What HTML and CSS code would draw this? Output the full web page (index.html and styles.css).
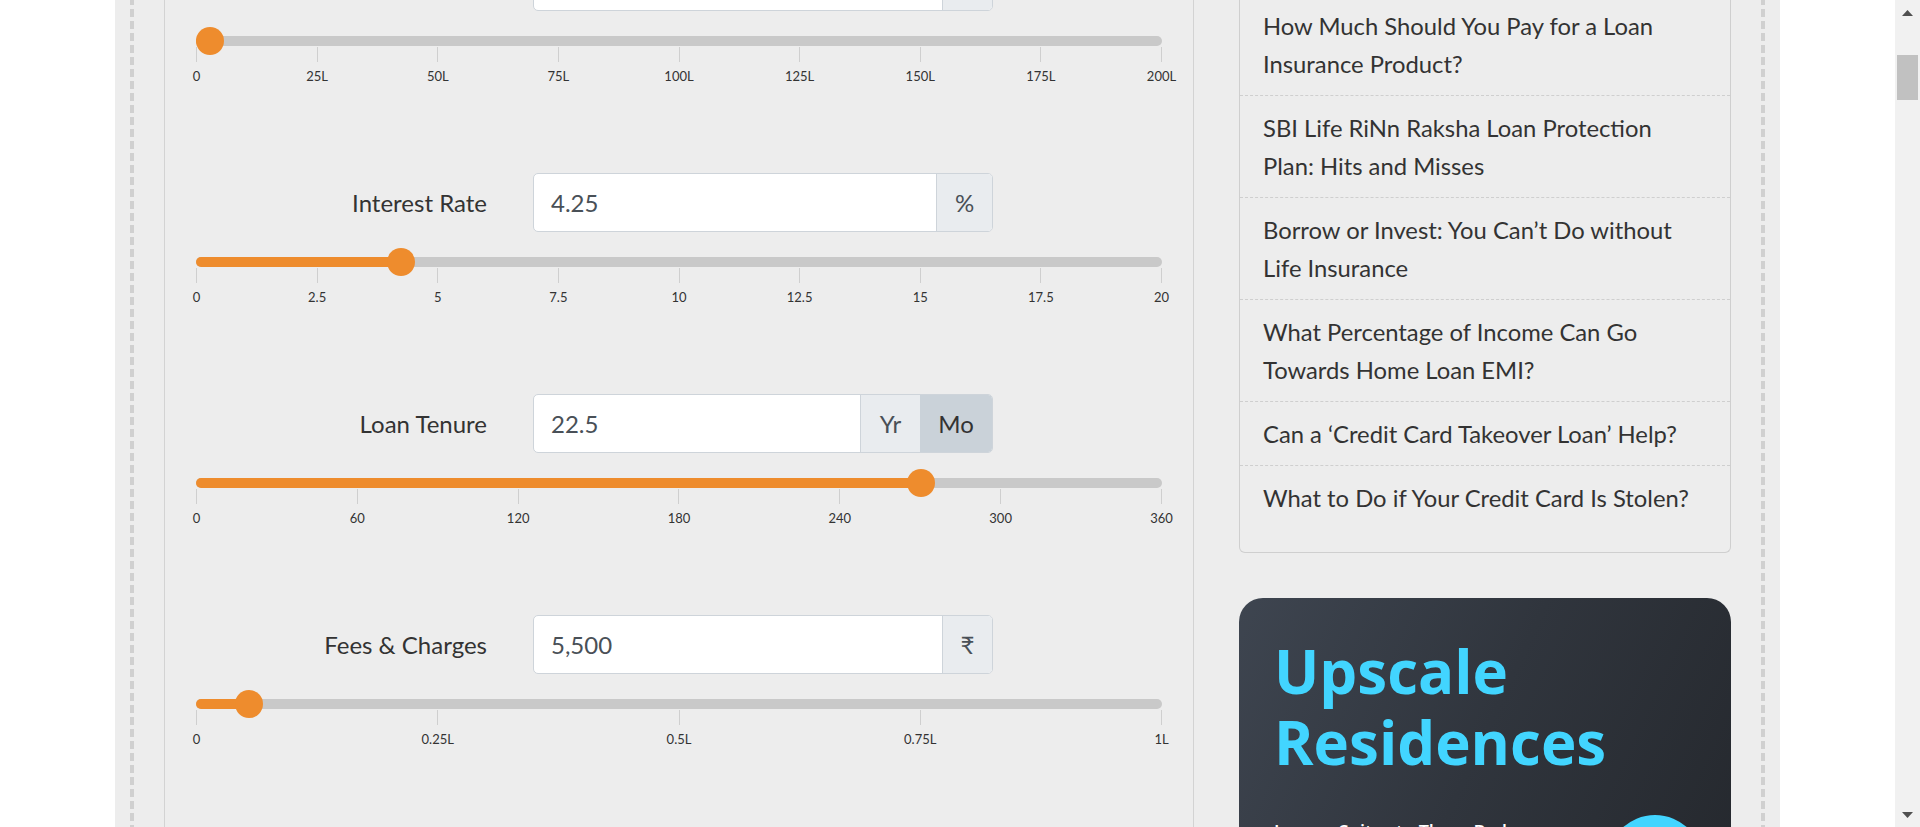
FILE: index.html
```html
<!DOCTYPE html>
<html lang="en">
<head>
<meta charset="utf-8">
<title>EMI Calculator</title>
<link rel="stylesheet" href="styles.css">
</head>
<body>
<div class="viewport">
  <div class="page">
    <div class="frame">
      <div class="inner">
        <main class="calc">
          <section class="field">
            <div class="field-row">
              <div class="field-label">Loan Amount</div>
              <div class="input-group">
                <div class="form-value">3,00,000</div>
                <div class="addon addon-rupee">₹</div>
              </div>
            </div>
            <div class="slider">
              <div class="track"><div class="fill" style="width:1.5%"></div><span class="handle" style="left:1.5%"></span></div>
              <div class="ticks">
                <div class="tick"><span>0</span></div>
                <div class="tick"><span>25L</span></div>
                <div class="tick"><span>50L</span></div>
                <div class="tick"><span>75L</span></div>
                <div class="tick"><span>100L</span></div>
                <div class="tick"><span>125L</span></div>
                <div class="tick"><span>150L</span></div>
                <div class="tick"><span>175L</span></div>
                <div class="tick"><span>200L</span></div>
              </div>
            </div>
          </section>

          <section class="field">
            <div class="field-row">
              <div class="field-label">Interest Rate</div>
              <div class="input-group">
                <div class="form-value">4.25</div>
                <div class="addon addon-pct">%</div>
              </div>
            </div>
            <div class="slider">
              <div class="track"><div class="fill" style="width:21.25%"></div><span class="handle" style="left:21.25%"></span></div>
              <div class="ticks">
                <div class="tick"><span>0</span></div>
                <div class="tick"><span>2.5</span></div>
                <div class="tick"><span>5</span></div>
                <div class="tick"><span>7.5</span></div>
                <div class="tick"><span>10</span></div>
                <div class="tick"><span>12.5</span></div>
                <div class="tick"><span>15</span></div>
                <div class="tick"><span>17.5</span></div>
                <div class="tick"><span>20</span></div>
              </div>
            </div>
          </section>

          <section class="field">
            <div class="field-row">
              <div class="field-label">Loan Tenure</div>
              <div class="input-group">
                <div class="form-value">22.5</div>
                <div class="addon addon-yr">Yr</div>
                <div class="addon addon-mo">Mo</div>
              </div>
            </div>
            <div class="slider">
              <div class="track"><div class="fill" style="width:75%"></div><span class="handle" style="left:75%"></span></div>
              <div class="ticks">
                <div class="tick"><span>0</span></div>
                <div class="tick"><span>60</span></div>
                <div class="tick"><span>120</span></div>
                <div class="tick"><span>180</span></div>
                <div class="tick"><span>240</span></div>
                <div class="tick"><span>300</span></div>
                <div class="tick"><span>360</span></div>
              </div>
            </div>
          </section>

          <section class="field">
            <div class="field-row">
              <div class="field-label">Fees &amp; Charges</div>
              <div class="input-group">
                <div class="form-value">5,500</div>
                <div class="addon addon-rupee">₹</div>
              </div>
            </div>
            <div class="slider">
              <div class="track"><div class="fill" style="width:5.5%"></div><span class="handle" style="left:5.5%"></span></div>
              <div class="ticks">
                <div class="tick"><span>0</span></div>
                <div class="tick"><span>0.25L</span></div>
                <div class="tick"><span>0.5L</span></div>
                <div class="tick"><span>0.75L</span></div>
                <div class="tick"><span>1L</span></div>
              </div>
            </div>
          </section>
        </main>

        <aside class="side">
          <div class="links">
            <ul class="link-list">
              <li>How Much Should You Pay for a Loan Insurance Product?</li>
              <li>SBI Life RiNn Raksha Loan Protection Plan: Hits and Misses</li>
              <li>Borrow or Invest: You Can’t Do without Life Insurance</li>
              <li>What Percentage of Income Can Go Towards Home Loan EMI?</li>
              <li>Can a ‘Credit Card Takeover Loan’ Help?</li>
              <li>What to Do if Your Credit Card Is Stolen?</li>
            </ul>
          </div>

          <div class="promo">
            <h2 class="promo-title">Upscale Residences</h2>
            <div class="promo-row">
              <p class="promo-text">Luxury Suites to Three Bedroom Homes</p>
              <span class="promo-btn"></span>
            </div>
          </div>
        </aside>
      </div>
    </div>
  </div>

  <div class="scrollbar">
    <div class="sb-btn">
      <svg width="11" height="6" viewBox="0 0 11 6"><polygon points="0,6 5.5,0 11,6" fill="#505050"/></svg>
    </div>
    <div class="sb-track"><div class="sb-thumb"></div></div>
    <div class="sb-btn">
      <svg width="11" height="6" viewBox="0 0 11 6"><polygon points="0,0 11,0 5.5,6" fill="#505050"/></svg>
    </div>
  </div>
</div>
</body>
</html>
```

FILE: styles.css
```css
* { box-sizing: border-box; }

html, body {
  margin: 0;
  height: 100%;
  overflow: hidden;
}

body {
  font-family: Lato, "Noto Sans", sans-serif;
  color: #333;
  background: #fff;
}

.viewport {
  display: flex;
  height: 100vh;
}

.page {
  flex: 1;
  min-width: 0;
  display: flex;
  justify-content: center;
}

.frame {
  flex: none;
  width: 1665px;
  height: 100%;
  background: #ededed;
  padding: 0 15px;
}

.inner {
  height: 100%;
  display: flex;
  align-items: flex-start;
  gap: 45px;
  padding: 0 34px;
  background:
    repeating-linear-gradient(to bottom, #d0d0d0 0 8px, transparent 8px 12px) left -3px / 4px 110% no-repeat,
    repeating-linear-gradient(to bottom, #d0d0d0 0 8px, transparent 8px 12px) right -3px / 4px 110% no-repeat;
}

/* calculator card */
.calc {
  flex: none;
  width: 1030px;
  align-self: stretch;
  margin-top: -48px;
  height: calc(100% + 48px);
  border-left: 1px solid #d3d3d3;
  border-right: 1px solid #d3d3d3;
  padding: 0 31px;
}

.field {
  height: 221px;
}

.field-row {
  display: grid;
  grid-template-columns: 291px 460px;
  column-gap: 46px;
  align-items: center;
  height: 59px;
}

.field-label {
  text-align: right;
  font-size: 24px;
  color: #333;
}

.input-group {
  display: flex;
  align-items: center;
  height: 59px;
  border: 1px solid #ced4da;
  border-radius: 5px;
  overflow: hidden;
  background: #fff;
}

.form-value {
  flex: 1;
  padding: 0 17px;
  font-size: 24px;
  line-height: 30px;
  color: #495057;
}

.addon {
  align-self: stretch;
  display: flex;
  align-items: center;
  justify-content: center;
  background: #e9ecef;
  border-left: 1px solid #ced4da;
  font-size: 24px;
  color: #495057;
}

.addon-pct { width: 56px; }
.addon-rupee { width: 50px; }
.addon-yr { width: 60px; }
.addon-mo { width: 72px; background: #cad2d9; color: #333; border-left: none; }

.slider {
  margin-top: 25px;
}

.track {
  position: relative;
  height: 10px;
  border-radius: 5px;
  background: #c9c9c9;
}

.fill {
  height: 100%;
  border-radius: 5px;
  background: #ee8c2d;
}

.handle {
  position: absolute;
  top: 50%;
  width: 28px;
  height: 28px;
  margin-top: -14px;
  border-radius: 50%;
  background: #ee8c2d;
  transform: translateX(-50%);
}

.ticks {
  display: flex;
  justify-content: space-between;
  margin-top: 1px;
}

.tick {
  width: 1px;
  display: flex;
  flex-direction: column;
  align-items: center;
}

.tick::before {
  content: "";
  display: block;
  width: 1px;
  height: 15px;
  background: #cfcfcf;
}

.tick span {
  margin-top: 6px;
  font-size: 13px;
  line-height: 16px;
  white-space: nowrap;
  color: #333;
}

/* sidebar */
.side {
  flex: none;
  width: 492px;
  margin-top: -6px;
}

.links {
  border: 1px solid #cfcfcf;
  border-top: none;
  border-radius: 0 0 6px 6px;
  padding-bottom: 23px;
}

.link-list {
  list-style: none;
  margin: 0;
  padding: 0;
}

.link-list li {
  padding: 13px 30px 12px 23px;
  font-size: 23.8px;
  line-height: 38px;
  color: #333;
  border-bottom: 1px dashed #cfcfcf;
}

.link-list li:last-child {
  border-bottom: none;
}

.promo {
  margin-top: 45px;
  height: 420px;
  border-radius: 24px;
  padding: 38px 28px 0 35px;
  background: linear-gradient(115deg, #3e4550 0%, #30353d 45%, #23262b 100%);
  font-family: "Open Sans", "Noto Sans", sans-serif;
}

.promo-title {
  margin: 0;
  font-size: 60px;
  line-height: 71px;
  font-weight: 700;
  color: #42d5ff;
}

.promo-row {
  display: flex;
  justify-content: space-between;
  align-items: flex-start;
  margin-top: 40px;
}

.promo-text {
  margin: 0;
  width: 300px;
  font-size: 18px;
  line-height: 27px;
  font-weight: 600;
  color: #fff;
}

.promo-btn {
  flex: none;
  width: 96px;
  height: 96px;
  margin-top: -3px;
  border-radius: 50%;
  background: #42d5ff;
}

/* scrollbar */
.scrollbar {
  flex: none;
  width: 25px;
  height: 100%;
  background: #f1f1f1;
  display: flex;
  flex-direction: column;
}

.sb-btn {
  height: 25px;
  display: flex;
  align-items: center;
  justify-content: center;
}

.sb-btn svg { display: block; }

.sb-track {
  flex: 1;
  padding: 30px 2px 0;
}

.sb-thumb {
  height: 45px;
  background: #c1c1c1;
}
```
